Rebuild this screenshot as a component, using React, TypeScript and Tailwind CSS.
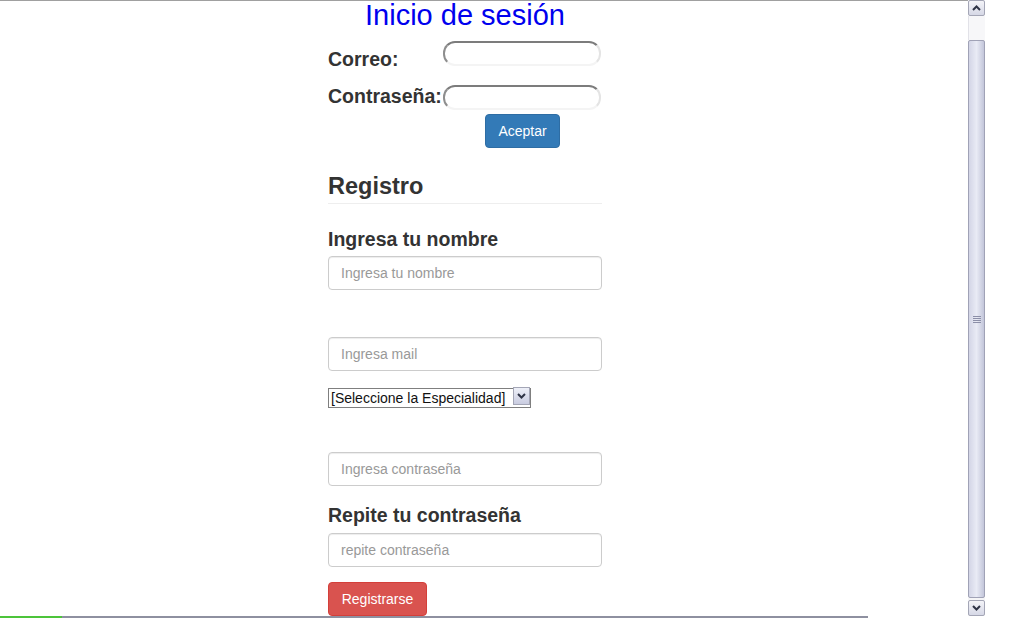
import React from 'react';

function Chevron({ up }: { up?: boolean }) {
  return (
    <svg width="9" height="6" viewBox="0 0 9 6" className="block">
      <path
        d={up ? 'M1 5 L4.5 1.5 L8 5' : 'M1 1 L4.5 4.5 L8 1'}
        fill="none"
        stroke="#2f3446"
        strokeWidth="2"
      />
    </svg>
  );
}

function TextField({ placeholder, className = '' }: { placeholder: string; className?: string }) {
  return (
    <input
      type="text"
      placeholder={placeholder}
      className={`block w-full h-[34px] px-[12px] text-[14px] text-[#555] bg-white border border-[#ccc] rounded-[4px] shadow-[inset_0_1px_1px_rgba(0,0,0,0.075)] placeholder:text-[#999] outline-none ${className}`}
    />
  );
}

// old-style rounded login box
function RoundField() {
  return (
    <input
      type="text"
      className="block w-[158px] h-[25px] bg-white rounded-[12px] border-2 border-t-[#7c7c7c] border-l-[#8e8e8e] border-r-[#e4e4e4] border-b-[#f4f4f4] outline-none"
    />
  );
}

function Scrollbar() {
  return (
    <div className="w-[17px] h-full flex flex-col bg-[#f5f5f7]">
      <div className="h-[16px] flex items-center justify-center border border-[#a4a6b6] rounded-[2px] bg-gradient-to-b from-[#f4f4f8] to-[#d6d8e6]">
        <Chevron up />
      </div>
      <div className="h-[24px] bg-[#f7f7f9] border-l border-[#e2e2e8]" />
      <div className="flex-1 flex items-center justify-center border border-[#a0a2b6] rounded-[2px] bg-gradient-to-r from-[#d3d5e6] via-[#e9ebf5] to-[#c3c6da]">
        <div className="flex flex-col gap-[1px]">
          <div className="w-[8px] h-[1px] bg-[#8c8fa8]" />
          <div className="w-[8px] h-[1px] bg-[#8c8fa8]" />
          <div className="w-[8px] h-[1px] bg-[#8c8fa8]" />
          <div className="w-[8px] h-[1px] bg-[#8c8fa8]" />
        </div>
      </div>
      <div className="h-[2px]" />
      <div className="h-[16px] flex items-center justify-center border border-[#a4a6b6] rounded-[2px] bg-gradient-to-b from-[#f4f4f8] to-[#d6d8e6]">
        <Chevron />
      </div>
    </div>
  );
}

export default function App() {
  return (
    <div className="w-[1024px] h-[619px] overflow-hidden bg-white flex flex-col font-['Liberation_Sans',Arial,sans-serif]">
      <div className="h-[616px] flex">
        {/* Page */}
        <div className="w-[968px] h-full overflow-hidden border-t border-[#a0a0a0]">
          <div className="ml-[328px] w-[274px] flex flex-col">
            {/* Login */}
            <h1 className="h-[29px] text-center text-[29px] leading-[29px] text-[#0000ee]">
              Inicio de sesión
            </h1>

            <div className="mt-[11px] flex h-[25px]">
              <label className="w-[115px] shrink-0 mt-[8px] text-[19.5px] leading-[20px] font-bold text-[#333] whitespace-nowrap">
                Correo:
              </label>
              <RoundField />
            </div>

            <div className="mt-[19px] flex h-[25px]">
              <label className="w-[115px] shrink-0 mt-[1px] text-[19.5px] leading-[20px] font-bold text-[#333] whitespace-nowrap">
                Contraseña:
              </label>
              <RoundField />
            </div>

            <button className="mt-[4px] ml-[157px] w-[75px] h-[34px] rounded-[4px] bg-[#337ab7] border border-[#2e6da4] text-white text-[14px]">
              Aceptar
            </button>

            {/* Registro */}
            <h3 className="mt-[25px] pb-[4px] border-b border-[#eee] text-[23.5px] leading-[26px] font-bold text-[#333]">
              Registro
            </h3>

            <label className="mt-[25px] text-[19.5px] leading-[20px] font-bold text-[#333]">
              Ingresa tu nombre
            </label>
            <TextField placeholder="Ingresa tu nombre" className="mt-[7px]" />

            <TextField placeholder="Ingresa mail" className="mt-[47px]" />

            <div className="mt-[15px] relative w-[203px] h-[20px]">
              <select className="appearance-none w-full h-full pl-[2px] pr-[18px] border border-[#7f7f7f] bg-white text-[14px] leading-[18px] text-[#111] outline-none">
                <option>[Seleccione la Especialidad]</option>
              </select>
              <span className="absolute right-[1px] top-[1px] w-[17px] h-[18px] flex items-center justify-center border border-[#a4a6b6] bg-gradient-to-b from-[#eef0f8] to-[#c9cce0]">
                <Chevron />
              </span>
            </div>

            <TextField placeholder="Ingresa contraseña" className="mt-[46px]" />

            <label className="mt-[19px] text-[19.5px] leading-[20px] font-bold text-[#333]">
              Repite tu contraseña
            </label>
            <TextField placeholder="repite contraseña" className="mt-[8px]" />

            <button className="mt-[15px] w-[99px] h-[34px] rounded-[4px] bg-[#d9534f] border border-[#d43f3a] text-white text-[14px]">
              Registrarse
            </button>
          </div>
        </div>

        <Scrollbar />
      </div>

      {/* status strip */}
      <div className="flex h-[3px]">
        <div className="w-[62px] h-[2px] bg-[#4cc43a]" />
        <div className="w-[806px] h-[2px] bg-[#8e90a0]" />
      </div>
    </div>
  );
}
